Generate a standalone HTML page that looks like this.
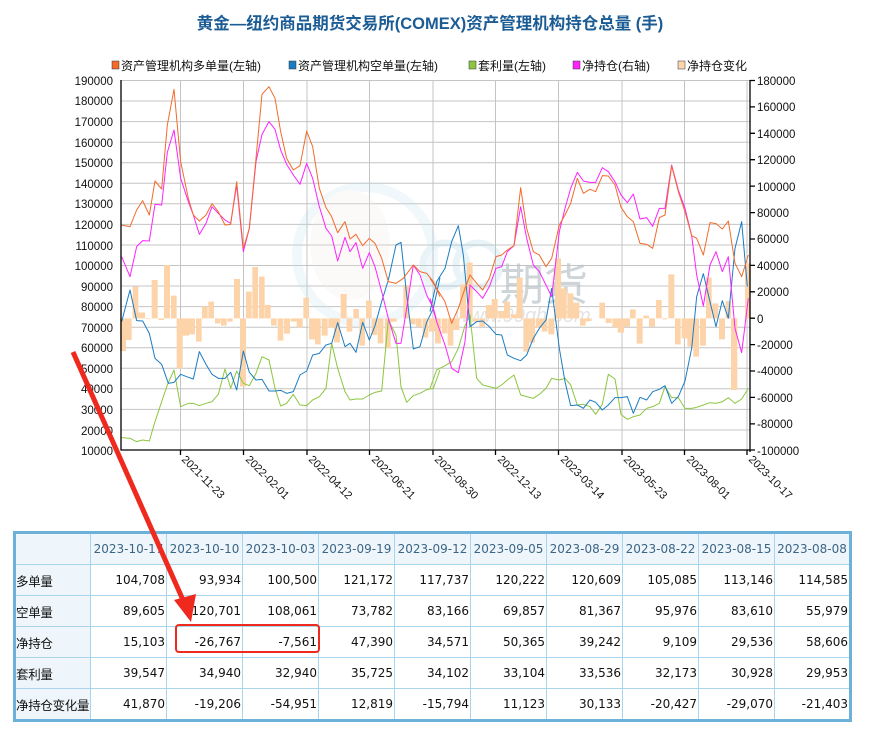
<!DOCTYPE html>
<html><head><meta charset="utf-8">
<style>
body{margin:0;background:#fff;width:872px;height:751px;overflow:hidden;position:relative;font-family:"Liberation Sans","Noto Sans CJK SC",sans-serif}
#tbl{position:absolute;left:13px;top:531px;width:839px;border-collapse:collapse;border:3px solid #6cb2d8;table-layout:fixed}
#tbl td{border:1px solid #a8d4ec;height:30px;padding:0 1px 0 0;font-family:"DejaVu Sans","Noto Sans CJK SC",sans-serif;font-size:12px;color:#111;text-align:right;white-space:nowrap;overflow:hidden}
#tbl tr:first-child td{background:#eef6fb;color:#3b6585;text-align:center;padding:0}
#tbl td.l{text-align:left;background:#eef6fb;font-family:"Liberation Sans","Noto Sans CJK SC",sans-serif;font-size:12.5px;padding:0;letter-spacing:-0.3px}
</style></head><body>
<svg width="872" height="751" style="position:absolute;left:0;top:0" font-family="Liberation Sans, Noto Sans CJK SC, sans-serif">
<text x="430" y="29" text-anchor="middle" font-size="16.5" font-weight="bold" fill="#1c5c94">黄金—纽约商品期货交易所(COMEX)资产管理机构持仓总量 (手)</text>
<g font-size="12" fill="#111">
<rect x="112" y="61" width="7" height="8" fill="#f26b2b" stroke="#333" stroke-width="0.5"/><text x="121" y="70">资产管理机构多单量(左轴)</text>
<rect x="289" y="61" width="7" height="8" fill="#1a7cc4" stroke="#333" stroke-width="0.5"/><text x="298" y="70">资产管理机构空单量(左轴)</text>
<rect x="469" y="61" width="7" height="8" fill="#8cc63f" stroke="#333" stroke-width="0.5"/><text x="478" y="70">套利量(左轴)</text>
<rect x="573" y="61" width="7" height="8" fill="#ff22ff" stroke="#333" stroke-width="0.5"/><text x="582" y="70">净持仓(右轴)</text>
<rect x="678" y="61" width="7" height="8" fill="#fcd5ac" stroke="#333" stroke-width="0.5"/><text x="687" y="70">净持仓变化</text>
</g>
<g stroke="#c4c4c4" stroke-width="1">
<path d="M121 80.5H750M121 101H750M121 121.6H750M121 142.2H750M121 162.7H750M121 183.3H750M121 203.8H750M121 224.4H750M121 245H750M121 265.5H750M121 286H750M121 306.6H750M121 327.2H750M121 347.7H750M121 368.3H750M121 388.8H750M121 409.4H750M121 430H750"/>
<path d="M180.5 80V450M243.5 80V450M307 80V450M369.5 80V450M433 80V450M495.5 80V450M558.5 80V450M622 80V450M684.5 80V450M747 80V450"/>
</g>
<g opacity="0.22">
<circle cx="365" cy="255" r="68" fill="none" stroke="#bfe0ee" stroke-width="10"/>
<ellipse cx="350" cy="245" rx="40" ry="55" fill="#f3ece2"/>
<circle cx="445" cy="265" r="22" fill="none" stroke="#9fd0e6" stroke-width="7"/>
<circle cx="478" cy="265" r="22" fill="none" stroke="#9fd0e6" stroke-width="7"/>
</g>
<text x="500" y="300" font-size="44" fill="#b8c4c8" opacity="0.7">期货</text>
<text x="455" y="322" font-size="20" fill="#c8c8c8" opacity="0.5" font-style="italic">www.99qh.com</text>
<g transform="translate(110,75) scale(0.33333)">
<g fill="#fdd3a9">
<path d="M30 730H48V828H30zM48 730H65V795H48zM68 635H85V730H68zM85 712H105V730H85zM105 730H122V732H105zM125 615H143V730H125zM145 730H162V735H145zM162 570H180V730H162zM183 662H200V730H183zM200 730H218V880H200zM218 730H237V782H218zM237 730H255V778H237zM258 730H275V800H258zM276 695H293V730H276zM295 680H312V730H295zM315 730H332V745H315zM333 730H350V752H333zM352 730H368V740H352zM372 612H390V730H372zM390 730H408V935H390zM408 650H425V730H408zM427 576H444V730H427zM447 605H464V730H447zM465 690H482V730H465zM483 730H500V752H483zM503 730H520V797H503zM522 730H540V776H522zM542 730H560V740H542zM560 730H578V757H560zM580 668H597V730H580zM597 730H615V793H597zM615 730H632V808H615zM635 730H653V782H635zM655 730H672V758H655zM672 730H690V802H672zM692 657H710V730H692zM710 730H727V770H710zM730 702H747V730H730zM748 730H765V812H748zM768 677H785V730H768zM785 730H802V780H785zM803 730H820V805H803zM825 730H842V820H825zM842 730H860V740H842zM880 630H897V730H880zM900 730H917V748H900zM918 730H935V755H918zM938 730H955V788H938zM957 730H975V770H957zM975 730H992V805H975z"/>
</g>
<g fill="none" stroke-width="3" stroke-linejoin="round">
<polyline stroke="#8cc63f" points="35,1088 60,1090 80,1100 98,1095 118,1098 135,1040 155,980 172,930 192,885 212,995 235,985 250,985 268,992 288,985 306,980 325,958 345,882 362,940 380,888 400,925 418,932 438,895 456,845 477,855 495,940 512,993 530,985 550,958 570,990 590,992 608,975 628,965 648,940 665,805 683,880 705,950 720,975 738,972 758,972 778,960 795,952 815,948 835,735 858,780 873,935 890,982 910,962 930,955 950,944 970,940 990,885"/>
<polyline stroke="#1a7cc4" points="35,740 60,645 80,737 98,738 118,775 135,850 155,868 175,925 192,922 212,898 230,905 250,912 268,830 288,868 306,898 325,910 345,910 362,892 380,945 400,828 418,892 438,915 456,913 477,948 495,948 512,946 530,955 550,950 570,900 590,888 608,840 628,835 648,810 665,805 683,743 705,815 720,805 738,832 758,742 778,795 795,752 815,680 835,615 858,510 873,502 890,660 910,822 930,815 950,742 970,700 990,608"/>
<polyline stroke="#ff22ff" points="35,545 60,605 80,515 98,497 118,498 135,388 155,390 172,232 192,165 212,310 235,380 250,420 268,478 288,445 306,395 325,415 345,435 362,445 380,330 400,530 418,460 438,260 456,178 477,140 495,163 512,225 530,268 550,300 570,328 590,265 608,310 628,395 648,460 665,483 683,558 705,487 720,530 738,503 758,580 778,533 795,575 815,650 835,730 858,805 873,805 890,700 910,570 930,600 950,660 970,700 990,770"/>
<polyline stroke="#f26b2b" points="35,450 60,455 80,405 98,377 118,420 135,318 155,342 172,150 192,43 212,260 235,370 250,420 268,438 288,420 306,386 325,410 345,450 362,448 380,320 400,520 418,460 438,250 456,58 477,35 495,70 512,170 530,250 550,285 570,272 590,168 608,215 628,340 648,398 665,425 683,473 705,440 720,492 738,478 758,512 778,490 795,505 815,550 835,620 858,625 880,610 910,570 930,590 950,595 970,620 990,665"/>
</g>
</g>
<g transform="translate(430,75) scale(0.33333)">
<g fill="#fdd3a9">
<path d="M0 730H15V768H0zM15 730H32V805H15zM35 730H52V775H35zM53 730H70V812H53zM70 730H88V765H70zM90 628H108V730H90zM110 563H128V730H110zM128 730H145V740H128zM148 730H165V755H148zM168 690H185V730H168zM185 672H203V730H185zM205 708H222V730H205zM222 680H240V730H222zM243 718H260V730H243zM260 608H278V730H260zM280 730H297V830H280zM297 730H315V803H297zM317 730H335V758H317zM335 730H352V770H335zM355 730H373V778H355zM375 550H393V730H375zM393 640H410V730H393zM412 655H430V730H412zM430 683H448V730H430zM450 730H467V752H450zM467 730H485V738H467zM508 683H525V730H508zM527 730H545V744H527zM547 730H563V757H547zM563 730H582V773H563zM582 730H600V755H582zM600 703H617V730H600zM620 730H638V806H620zM640 722H657V730H640zM657 730H675V755H657zM678 675H695V730H678zM697 730H713V733H697zM715 598H733V730H715zM735 730H752V808H735zM755 730H772V790H755zM772 730H790V815H772zM790 730H807V845H790zM810 730H828V812H810zM828 608H845V730H828zM847 685H865V730H847zM867 730H885V793H867zM887 678H903V730H887zM903 730H922V945H903zM945 565H962V730H945z"/>
</g>
<g fill="none" stroke-width="3" stroke-linejoin="round">
<polyline stroke="#8cc63f" points="0,940 20,885 45,872 65,860 85,820 105,752 120,720 140,910 158,930 178,935 198,940 215,930 232,915 252,900 272,960 290,965 310,970 328,958 348,940 365,910 388,915 405,910 422,930 442,990 460,988 480,995 497,1018 517,988 535,898 555,912 573,1018 592,1033 610,1025 630,1020 650,1000 668,995 688,985 705,935 725,968 745,968 765,1000 785,1000 800,997 820,990 840,983 858,985 877,980 895,968 915,985 935,972 955,940"/>
<polyline stroke="#1a7cc4" points="0,710 20,620 45,580 65,500 85,452 100,540 120,755 140,740 158,738 178,755 198,778 215,780 232,840 252,850 272,857 290,840 310,790 328,760 348,735 365,640 388,820 405,920 422,992 442,990 460,1000 480,975 497,982 517,1005 535,990 555,968 573,968 592,965 610,1015 630,967 650,975 668,950 688,943 705,932 725,985 745,965 765,918 785,820 800,665 820,596 840,680 858,755 877,677 895,730 915,520 935,440 952,635"/>
<polyline stroke="#ff22ff" points="0,670 20,740 45,810 65,880 85,893 105,800 120,630 140,650 158,670 178,635 198,580 215,575 232,530 252,512 272,395 290,490 310,570 328,590 348,630 365,665 388,470 405,400 422,340 442,292 460,318 480,322 497,322 517,278 535,290 555,320 573,360 592,383 610,357 630,432 650,428 668,454 688,400 705,400 725,270 745,345 765,400 785,482 800,600 820,693 840,570 858,530 877,590 895,545 915,760 935,833 955,670"/>
<polyline stroke="#f26b2b" points="0,610 20,640 45,680 65,745 85,700 105,640 120,600 140,625 158,645 178,610 198,545 215,540 232,525 252,512 272,338 290,460 310,530 328,540 348,575 365,550 388,450 405,420 422,385 442,310 460,355 480,343 497,350 517,302 535,303 555,330 573,397 592,425 610,440 630,505 650,508 668,520 688,428 705,420 725,273 745,350 765,410 785,482 800,490 820,540 840,443 858,446 877,462 895,438 915,565 935,605 955,540"/>
</g>
</g>
<g stroke="#000" stroke-width="1.3" fill="none">
<path d="M121 80V450H750M750 80V452"/>
<path d="M180.5 450v5M243.5 450v5M307 450v5M369.5 450v5M433 450v5M495.5 450v5M558.5 450v5M622 450v5M684.5 450v5M747 450v5"/>
<path d="M750 80.5h5M750 106.9h5M750 133.3h5M750 159.7h5M750 186.1h5M750 212.6h5M750 239h5M750 265.4h5M750 291.8h5M750 318.2h5M750 344.6h5M750 371h5M750 397.4h5M750 423.9h5M750 450h5"/>
</g>
<g font-size="11.5" fill="#111" text-anchor="end">
<text x="113" y="85">190000</text><text x="113" y="105">180000</text><text x="113" y="126">170000</text><text x="113" y="147">160000</text><text x="113" y="167">150000</text><text x="113" y="188">140000</text><text x="113" y="208">130000</text><text x="113" y="229">120000</text><text x="113" y="250">110000</text><text x="113" y="270">100000</text><text x="113" y="291">90000</text><text x="113" y="311">80000</text><text x="113" y="332">70000</text><text x="113" y="352">60000</text><text x="113" y="373">50000</text><text x="113" y="393">40000</text><text x="113" y="414">30000</text><text x="113" y="435">20000</text><text x="113" y="455">10000</text>
</g>
<g font-size="11.5" fill="#111">
<text x="757" y="85">180000</text><text x="757" y="111">160000</text><text x="757" y="138">140000</text><text x="757" y="164">120000</text><text x="757" y="191">100000</text><text x="757" y="217">80000</text><text x="757" y="243">60000</text><text x="757" y="270">40000</text><text x="757" y="296">20000</text><text x="757" y="323">0</text><text x="757" y="349">-20000</text><text x="757" y="375">-40000</text><text x="757" y="402">-60000</text><text x="757" y="428">-80000</text><text x="757" y="455">-100000</text>
</g>
<g font-size="11" fill="#111">
<text transform="translate(181,460) rotate(45)">2021-11-23</text>
<text transform="translate(245,460) rotate(45)">2022-02-01</text>
<text transform="translate(308,460) rotate(45)">2022-04-12</text>
<text transform="translate(371,460) rotate(45)">2022-06-21</text>
<text transform="translate(434,460) rotate(45)">2022-08-30</text>
<text transform="translate(497,460) rotate(45)">2022-12-13</text>
<text transform="translate(560,460) rotate(45)">2023-03-14</text>
<text transform="translate(623,460) rotate(45)">2023-05-23</text>
<text transform="translate(686,460) rotate(45)">2023-08-01</text>
<text transform="translate(748,460) rotate(45)">2023-10-17</text>
</g>
</svg>
<table id="tbl">
<colgroup><col style="width:76px"><col><col><col><col><col><col><col><col><col><col></colgroup>
<tr><td class="l"></td><td>2023-10-17</td><td>2023-10-10</td><td>2023-10-03</td><td>2023-09-19</td><td>2023-09-12</td><td>2023-09-05</td><td>2023-08-29</td><td>2023-08-22</td><td>2023-08-15</td><td>2023-08-08</td></tr>
<tr><td class="l">多单量</td><td>104,708</td><td>93,934</td><td>100,500</td><td>121,172</td><td>117,737</td><td>120,222</td><td>120,609</td><td>105,085</td><td>113,146</td><td>114,585</td></tr>
<tr><td class="l">空单量</td><td>89,605</td><td>120,701</td><td>108,061</td><td>73,782</td><td>83,166</td><td>69,857</td><td>81,367</td><td>95,976</td><td>83,610</td><td>55,979</td></tr>
<tr><td class="l">净持仓</td><td>15,103</td><td>-26,767</td><td>-7,561</td><td>47,390</td><td>34,571</td><td>50,365</td><td>39,242</td><td>9,109</td><td>29,536</td><td>58,606</td></tr>
<tr><td class="l">套利量</td><td>39,547</td><td>34,940</td><td>32,940</td><td>35,725</td><td>34,102</td><td>33,104</td><td>33,536</td><td>32,173</td><td>30,928</td><td>29,953</td></tr>
<tr><td class="l">净持仓变化量</td><td>41,870</td><td>-19,206</td><td>-54,951</td><td>12,819</td><td>-15,794</td><td>11,123</td><td>30,133</td><td>-20,427</td><td>-29,070</td><td>-21,403</td></tr>
</table>
<svg width="872" height="751" style="position:absolute;left:0;top:0;pointer-events:none">
<line x1="73" y1="352" x2="183" y2="600" stroke="#f0291f" stroke-width="5"/>
<polygon points="174,600 196,594 191,622" fill="#f0291f"/>
<rect x="176" y="625" width="143" height="27" rx="3" fill="none" stroke="#f0291f" stroke-width="2"/>
</svg>
</body></html>
